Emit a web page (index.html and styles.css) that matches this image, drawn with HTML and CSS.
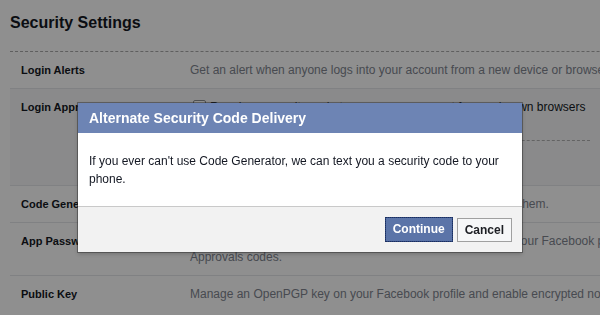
FILE: index.html
```html
<!DOCTYPE html>
<html>
<head>
<meta charset="utf-8">
<link rel="stylesheet" href="styles.css">
</head>
<body>
<div class="page">
  <h1 class="title">Security Settings</h1>
  <div class="rows">
    <div class="row">
      <div class="label">Login Alerts</div>
      <div class="desc nowrap">Get an alert when anyone logs into your account from a new device or browser.</div>
    </div>
    <div class="row row-open">
      <div class="label">Login Approvals</div>
      <div class="desc">
        <label class="check"><span class="box"></span>Require a security code to access my account from unknown browsers</label>
        <div class="sub">Code Generator is set up on your phone.</div>
      </div>
    </div>
    <div class="row">
      <div class="label">Code Generator</div>
      <div class="desc nowrap">Use your Facebook app to get security codes when you need them.</div>
    </div>
    <div class="row">
      <div class="label">App Passwords</div>
      <div class="desc wrap">Use special passwords to log into your apps instead of using your Facebook password or Login Approvals codes.</div>
    </div>
    <div class="row">
      <div class="label">Public Key</div>
      <div class="desc nowrap">Manage an OpenPGP key on your Facebook profile and enable encrypted notifications.</div>
    </div>
  </div>
</div>

<div class="overlay"></div>

<div class="dialog">
  <div class="dialog-head">Alternate Security Code Delivery</div>
  <div class="dialog-body">If you ever can't use Code Generator, we can text you a security code to your phone.</div>
  <div class="dialog-foot">
    <button class="btn btn-primary">Continue</button>
    <button class="btn btn-plain">Cancel</button>
  </div>
</div>
</body>
</html>
```

FILE: styles.css
```css
html, body {
  margin: 0;
  padding: 0;
  overflow: hidden;
  width: 600px;
  height: 315px;
  background: #ffffff;
  font-family: "Liberation Sans", Arial, sans-serif;
}

.page {
  width: 760px;
  padding-left: 10px;
}

.title {
  margin: 0;
  padding-top: 13px;
  height: 38px;
  font-size: 16px;
  line-height: 20px;
  font-weight: bold;
  color: #141823;
  border-bottom: 1px dashed #aaaaaa;
}

.row {
  display: flex;
  padding: 10px 0;
  border-top: 1px solid #e5e6e9;
  font-size: 12px;
  line-height: 16px;
}

.row:first-child {
  border-top: none;
}

.row-open {
  background: #f6f7f8;
  height: 76px;
}

.label {
  width: 169px;
  padding-left: 11px;
  flex-shrink: 0;
  font-size: 11px;
  font-weight: bold;
  color: #141823;
}

.desc {
  color: #80858f;
}

.nowrap {
  white-space: nowrap;
}

.wrap {
  width: 540px;
}

.check {
  display: flex;
  align-items: center;
  gap: 4px;
  color: #141823;
  white-space: nowrap;
}

.box {
  width: 11px;
  height: 11px;
  border: 1px solid #8a8d92;
  border-radius: 2px;
  background: #fff;
  margin-left: 3px;
  margin-top: -2px;
}

.sub {
  margin-top: 25px;
  width: 400px;
  border-top: 1px dashed #b0b0b0;
  padding-top: 8px;
  color: #80858f;
}

.overlay {
  position: fixed;
  inset: 0;
  background: rgba(0, 0, 0, 0.44);
}

.dialog {
  position: absolute;
  left: 78px;
  top: 103px;
  width: 444px;
  background: #ffffff;
  box-shadow: 0 0 0 1px rgba(40, 40, 40, 0.45), 0 2px 4px rgba(0, 0, 0, 0.2);
}

.dialog-head {
  height: 30px;
  padding-left: 11px;
  background: #6d84b4;
  color: #ffffff;
  font-size: 14px;
  font-weight: bold;
  line-height: 30px;
}

.dialog-body {
  padding: 19px 11px 18px;
  font-size: 12px;
  line-height: 18px;
  color: #141823;
}

.dialog-foot {
  display: flex;
  justify-content: flex-end;
  gap: 4px;
  padding: 10px 10px 10px;
  border-top: 1px solid #c9c9c9;
  background: #f2f2f2;
}

.btn {
  margin: 0;
  font-family: "Liberation Sans", Arial, sans-serif;
  font-size: 12px;
  font-weight: bold;
  line-height: 15px;
  border-radius: 0;
}

.btn-primary {
  height: 25px;
  padding: 0 7px;
  background: #5b74a8;
  color: #ffffff;
  border: 1px solid #29447e;
  outline: 1px dotted #1d2f5c;
  outline-offset: -1px;
}

.btn-plain {
  height: 24px;
  margin-top: 1px;
  padding: 0 7px;
  background: #f6f7f8;
  color: #1d1f24;
  border: 1px solid #a0a0a0;
}
```
